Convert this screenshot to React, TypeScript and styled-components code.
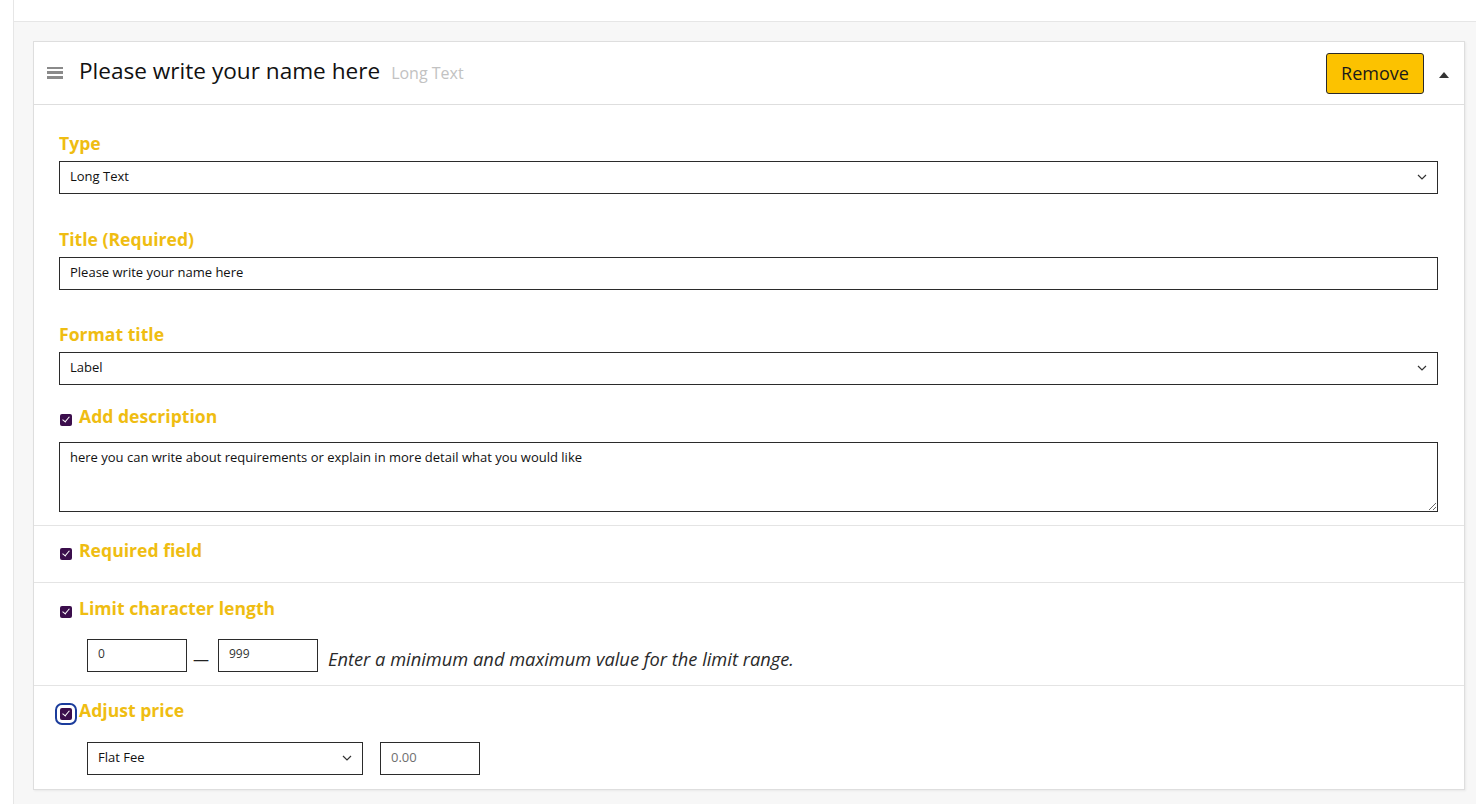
import React from 'react';
import styled, { createGlobalStyle } from 'styled-components';

const GlobalStyle = createGlobalStyle`
  html, body {
    margin: 0;
    padding: 0;
    background: #ffffff;
    font-family: 'Open Sans', 'Noto Sans', sans-serif;
    color: #111;
  }
  * {
    box-sizing: border-box;
  }
`;

const Page = styled.div`
  display: grid;
  grid-template-columns: 14px 1fr;
  width: 1476px;
  height: 804px;
  overflow: hidden;
`;

const SideStrip = styled.div`
  background: #fff;
  border-right: 1px solid #e6e6e6;
`;

const Main = styled.div`
  display: flex;
  flex-direction: column;
  background: #f7f7f7;
`;

const TopBar = styled.div`
  height: 22px;
  background: #fff;
  border-bottom: 1px solid #e6e6e6;
  flex-shrink: 0;
`;

const Content = styled.div`
  padding: 19px 11px 14px 19px;
`;

const Card = styled.section`
  background: #fff;
  border: 1px solid #dedede;
  box-shadow: 1px 1px 2px rgba(0, 0, 0, 0.06);
`;

const Header = styled.div`
  display: flex;
  align-items: center;
  height: 63px;
  padding: 0 0 0 13px;
  border-bottom: 1px solid #dedede;
`;

const DragHandle = styled.span`
  display: flex;
  flex-direction: column;
  justify-content: space-between;
  width: 16px;
  height: 12px;
  margin-right: 16px;
  margin-bottom: 1px;

  span {
    display: block;
    height: 2.5px;
    background: #8a8a8a;
  }
`;

const Title = styled.h2`
  margin: 0 0 5px;
  font-size: 22.6px;
  font-weight: 400;
  color: #111;
`;

const TypeHint = styled.span`
  margin-left: 11px;
  margin-bottom: 1px;
  font-size: 16px;
  color: #c2c2c2;
`;

const Spacer = styled.div`
  flex: 1;
`;

const RemoveButton = styled.button`
  width: 98px;
  height: 41px;
  margin-top: 1px;
  background: #fcc200;
  border: 1px solid #2a2a2a;
  border-radius: 3px;
  font-family: 'Open Sans', sans-serif;
  font-size: 18px;
  color: #1a1a1a;
  padding: 0 0 2px;
`;

const CollapseToggle = styled.button`
  width: 40px;
  height: 40px;
  display: flex;
  align-items: center;
  justify-content: center;
  background: none;
  border: none;
  padding: 0;
  margin-top: 4px;
`;

const Section = styled.div<{ $top: number; $bottom: number }>`
  padding: ${(p) => p.$top}px 26px ${(p) => p.$bottom}px 25px;
  border-bottom: 1px solid #e4e4e4;

  &:last-child {
    border-bottom: none;
  }
`;

const Label = styled.label<{ $gap?: number }>`
  display: flex;
  align-items: center;
  height: 24px;
  margin-bottom: ${(p) => p.$gap ?? 6}px;
  font-size: 17.6px;
  font-weight: 700;
  color: #efbd12;
`;

const Field = styled.div<{ $gap?: number }>`
  margin-bottom: ${(p) => p.$gap ?? 32}px;
`;

const CheckBox = styled.input.attrs({ type: 'checkbox' })<{ $focused?: boolean }>`
  appearance: none;
  width: 12px;
  height: 12px;
  margin: 7px 7px 0 1px;
  border-radius: 2px;
  background: #3b0e4c;
  position: relative;
  flex-shrink: 0;
  outline: ${(p) => (p.$focused ? '2px solid #1b3c9c' : 'none')};
  outline-offset: 3px;

  &::after {
    content: '';
    position: absolute;
    left: 4px;
    top: 1.5px;
    width: 3px;
    height: 6px;
    border: solid #fff;
    border-width: 0 1.6px 1.6px 0;
    transform: rotate(40deg);
  }
`;

const SelectWrap = styled.div<{ $width?: number }>`
  position: relative;
  width: ${(p) => (p.$width ? `${p.$width}px` : '100%')};
  flex-shrink: 0;

  svg {
    position: absolute;
    right: 11px;
    top: 13px;
    pointer-events: none;
  }
`;

const Select = styled.select`
  appearance: none;
  width: 100%;
  height: 33px;
  padding: 0 30px 3px 10px;
  border: 1px solid #2b2b2b;
  border-radius: 0;
  background: #fff;
  font-family: 'Open Sans', sans-serif;
  font-size: 13px;
  color: #111;
`;

const TextInput = styled.input<{ $width?: number }>`
  width: ${(p) => (p.$width ? `${p.$width}px` : '100%')};
  height: 33px;
  padding: 0 10px 3px;
  border: 1px solid #2b2b2b;
  border-radius: 0;
  font-family: 'Open Sans', sans-serif;
  font-size: 13px;
  color: #111;
  flex-shrink: 0;

  &::placeholder {
    color: #6f6f6f;
  }
`;

const SmallInput = styled(TextInput)`
  font-size: 12px;
  color: #333;
  padding-bottom: 4px;
`;

const TextArea = styled.textarea`
  display: block;
  width: 100%;
  height: 70px;
  padding: 5px 10px;
  border: 1px solid #2b2b2b;
  border-radius: 0;
  font-family: 'Open Sans', sans-serif;
  font-size: 13px;
  color: #111;
  resize: vertical;
`;

const InlineRow = styled.div<{ $gap: number }>`
  display: flex;
  align-items: center;
  gap: ${(p) => p.$gap}px;
  padding-left: 28px;
`;

const Dash = styled.span`
  font-size: 16px;
  color: #222;
  margin: 6px 9px 0 6px;
`;

const Hint = styled.span`
  margin-left: 10px;
  margin-top: 6px;
  font-size: 18.3px;
  font-style: italic;
  color: #2a2a2a;
`;

const Chevron = () => (
  <svg width="10" height="6" viewBox="0 0 10 6" fill="none">
    <path d="M1 1l4 4 4-4" stroke="#333" strokeWidth="1.2" />
  </svg>
);

const SelectField = ({ value, width }: { value: string; width?: number }) => (
  <SelectWrap $width={width}>
    <Select defaultValue={value}>
      <option>{value}</option>
    </Select>
    <Chevron />
  </SelectWrap>
);

export default function App() {
  return (
    <Page>
      <GlobalStyle />
      <SideStrip />
      <Main>
        <TopBar />
        <Content>
          <Card>
            <Header>
              <DragHandle>
                <span />
                <span />
                <span />
              </DragHandle>
              <Title>Please write your name here</Title>
              <TypeHint>Long Text</TypeHint>
              <Spacer />
              <RemoveButton>Remove</RemoveButton>
              <CollapseToggle aria-label="Collapse">
                <svg width="10" height="6" viewBox="0 0 10 6">
                  <path d="M0 6L5 0l5 6z" fill="#333" />
                </svg>
              </CollapseToggle>
            </Header>

            <Section $top={26} $bottom={13}>
              <Field $gap={33}>
                <Label>Type</Label>
                <SelectField value="Long Text" />
              </Field>
              <Field>
                <Label>Title (Required)</Label>
                <TextInput defaultValue="Please write your name here" />
              </Field>
              <Field $gap={19}>
                <Label>Format title</Label>
                <SelectField value="Label" />
              </Field>
              <Label $gap={14}>
                <CheckBox defaultChecked />
                Add description
              </Label>
              <TextArea defaultValue="here you can write about requirements or explain in more detail what you would like" />
            </Section>

            <Section $top={12} $bottom={20}>
              <Label $gap={0}>
                <CheckBox defaultChecked />
                Required field
              </Label>
            </Section>

            <Section $top={13} $bottom={13}>
              <Label $gap={19}>
                <CheckBox defaultChecked />
                Limit character length
              </Label>
              <InlineRow $gap={0}>
                <SmallInput $width={100} defaultValue="0" />
                <Dash>—</Dash>
                <SmallInput $width={100} defaultValue="999" />
                <Hint>Enter a minimum and maximum value for the limit range.</Hint>
              </InlineRow>
            </Section>

            <Section $top={12} $bottom={14}>
              <Label $gap={20}>
                <CheckBox defaultChecked $focused />
                Adjust price
              </Label>
              <InlineRow $gap={17}>
                <SelectField value="Flat Fee" width={276} />
                <TextInput $width={100} placeholder="0.00" />
              </InlineRow>
            </Section>
          </Card>
        </Content>
      </Main>
    </Page>
  );
}
